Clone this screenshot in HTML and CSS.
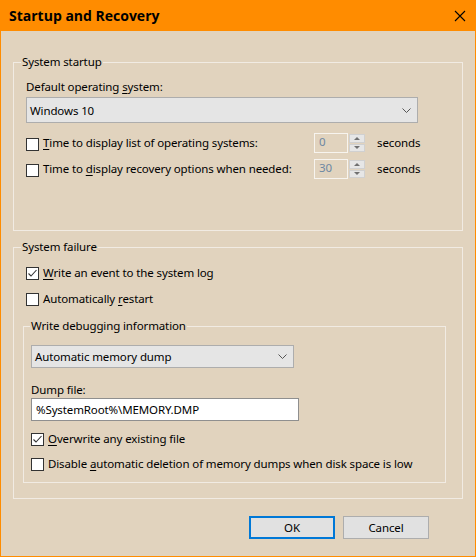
FILE: index.html
```html
<!DOCTYPE html>
<html>
<head>
<meta charset="utf-8">
<link rel="stylesheet" href="styles.css">
</head>
<body>
<div class="window">
  <div class="titlebar">
    <span class="title">Startup and Recovery</span>
    <svg class="close" width="12" height="12" viewBox="0 0 12 12"><path d="M1 1 L11 11 M11 1 L1 11" stroke="#000" stroke-width="1.1" fill="none"/></svg>
  </div>
  <div class="content">
    <fieldset class="group g-startup">
      <legend>System startup</legend>
      <div class="label first">Default operating <u>s</u>ystem:</div>
      <div class="combo combo-os">
        <span>Windows 10</span>
        <svg class="chev" width="9" height="5" viewBox="0 0 9 5"><path d="M0.5 0.5 L4.5 4.5 L8.5 0.5" stroke="#555" stroke-width="1" fill="none"/></svg>
      </div>
      <div class="timerow">
        <div class="check"><span class="box"></span><span><u>T</u>ime to display list of operating systems:</span></div>
        <div class="spin">
          <span class="spin-val">0</span>
          <span class="spin-btns"><span class="sb"><i class="tri up"></i></span><span class="sb"><i class="tri down"></i></span></span>
        </div>
        <span class="unit">seconds</span>
      </div>
      <div class="timerow second">
        <div class="check"><span class="box"></span><span>Time to <u>d</u>isplay recovery options when needed:</span></div>
        <div class="spin">
          <span class="spin-val">30</span>
          <span class="spin-btns"><span class="sb"><i class="tri up"></i></span><span class="sb"><i class="tri down"></i></span></span>
        </div>
        <span class="unit">seconds</span>
      </div>
    </fieldset>

    <fieldset class="group g-failure">
      <legend>System failure</legend>
      <div class="check row first-row"><span class="box checked"><svg width="11" height="11" viewBox="0 0 11 11"><path d="M1.5 5.5 L4 8 L9.5 2" stroke="#333" stroke-width="1.1" fill="none"/></svg></span><span><u>W</u>rite an event to the system log</span></div>
      <div class="check row"><span class="box"></span><span>Automatically <u>r</u>estart</span></div>

      <fieldset class="group g-debug">
        <legend>Write debugging information</legend>
        <div class="combo combo-dump">
          <span>Automatic memory dump</span>
          <svg class="chev" width="9" height="5" viewBox="0 0 9 5"><path d="M0.5 0.5 L4.5 4.5 L8.5 0.5" stroke="#555" stroke-width="1" fill="none"/></svg>
        </div>
        <div class="label dump-label">Dump file:</div>
        <div class="textbox">%SystemRoot%\MEMORY.DMP</div>
        <div class="check row ow-row"><span class="box checked"><svg width="11" height="11" viewBox="0 0 11 11"><path d="M1.5 5.5 L4 8 L9.5 2" stroke="#333" stroke-width="1.1" fill="none"/></svg></span><span><u>O</u>verwrite any existing file</span></div>
        <div class="check row dis-row"><span class="box"></span><span>Disable <u>a</u>utomatic deletion of memory dumps when disk space is low</span></div>
      </fieldset>
    </fieldset>

    <div class="buttons">
      <div class="btn default">OK</div>
      <div class="btn">Cancel</div>
    </div>
  </div>
</div>
</body>
</html>
```

FILE: styles.css
```css
* { box-sizing: border-box; }
html, body { margin: 0; padding: 0; }
body {
  width: 476px;
  height: 557px;
  font-family: "Noto Sans", "DejaVu Sans", sans-serif;
  font-size: 11.5px;
  letter-spacing: -0.12px;
  color: #000;
}
.window {
  width: 476px;
  height: 557px;
  background: #e1d3be;
  border: 1px solid #ff8c00;
  border-top: 0;
  display: flex;
  flex-direction: column;
}
.titlebar {
  height: 31px;
  margin: 0 -1px;
  background: #ff8c00;
  display: flex;
  align-items: center;
  justify-content: space-between;
  padding: 0 10px 0 9px;
}
.title {
  font-family: "Open Sans", "Noto Sans", sans-serif;
  font-weight: 700;
  font-size: 14px;
  letter-spacing: 0;
  color: #000;
}
.close { display: block; margin-right: 0; }
.content {
  padding: 23px 12px 0 12px;
  display: flex;
  flex-direction: column;
}
u { text-decoration: underline; text-underline-offset: 2px; text-decoration-thickness: 1px; }
.group {
  margin: 0;
  border: 1px solid #f1ebe3;
  padding: 0 12px;
  min-width: 0;
}
.group legend {
  padding: 0 1px;
  margin-left: -5px;
  line-height: 16px;
}
.g-startup { padding-bottom: 51px; }
.label { line-height: 16px; }
.label.first { margin-top: 9px; }
.combo {
  display: flex;
  align-items: center;
  justify-content: space-between;
  background: #e5e5e5;
  border: 1px solid #adadad;
  padding: 0 6px 0 3px;
}
.combo-os { height: 26px; margin-top: 2px; margin-right: 32px; }
.chev { display: block; }
.timerow {
  display: grid;
  grid-template-columns: 278px 53px auto;
  column-gap: 10px;
  align-items: center;
  height: 20px;
  margin-top: 10px;
}
.timerow.second { margin-top: 6px; }
.check {
  display: flex;
  align-items: center;
  gap: 4px;
  line-height: 16px;
  white-space: nowrap;
}
.box {
  width: 13px;
  height: 13px;
  flex: none;
  background: #fff;
  border: 1px solid #333;
  display: flex;
  align-items: center;
  justify-content: center;
}
.box svg { display: block; }
.timerow .check .box { margin-top: 2px; }
.spin {
  display: flex;
  height: 20px;
}
.spin-val {
  width: 34px;
  border: 1px solid #f7f4ef;
  color: #6d88a3;
  padding-left: 4px;
  line-height: 16px;
}
.spin-btns {
  width: 19px;
  display: flex;
  flex-direction: column;
  padding: 1px 2px 1px 1px;
  gap: 1px;
}
.sb {
  flex: 1;
  background: #e6e6e6;
  border: 1px solid #d0d0d0;
  display: flex;
  align-items: center;
  justify-content: center;
}
.tri { width: 0; height: 0; border-left: 3px solid transparent; border-right: 3px solid transparent; }
.tri.up { border-bottom: 3px solid #707070; }
.tri.down { border-top: 3px solid #707070; }
.unit { line-height: 16px; }

.g-failure { margin-top: 8px; padding-bottom: 15px; }
.row { height: 16px; margin-top: 10px; }
.first-row { margin-top: 10px; }
.g-debug {
  margin: 11px 4px 0 -3px;
  padding: 0 7px 10px 7px;
}
.g-debug legend { margin-left: -1px; }
.combo-dump { height: 23px; margin-top: 11px; margin-right: 144px; }
.dump-label { margin-top: 14px; }
.textbox {
  height: 23px;
  width: 268px;
  background: #fff;
  border: 1px solid #8f8f8f;
  padding-left: 4px;
  line-height: 21px;
}
.ow-row { margin-top: 10px; }
.dis-row { margin-top: 9px; }
.buttons {
  display: flex;
  justify-content: flex-end;
  gap: 8px;
  margin-top: 17px;
  padding-right: 34px;
}
.btn {
  width: 86px;
  height: 23px;
  background: #e1e1e1;
  border: 1px solid #adadad;
  display: flex;
  align-items: center;
  justify-content: center;
}
.btn.default { border: 2px solid #0078d7; }
```
